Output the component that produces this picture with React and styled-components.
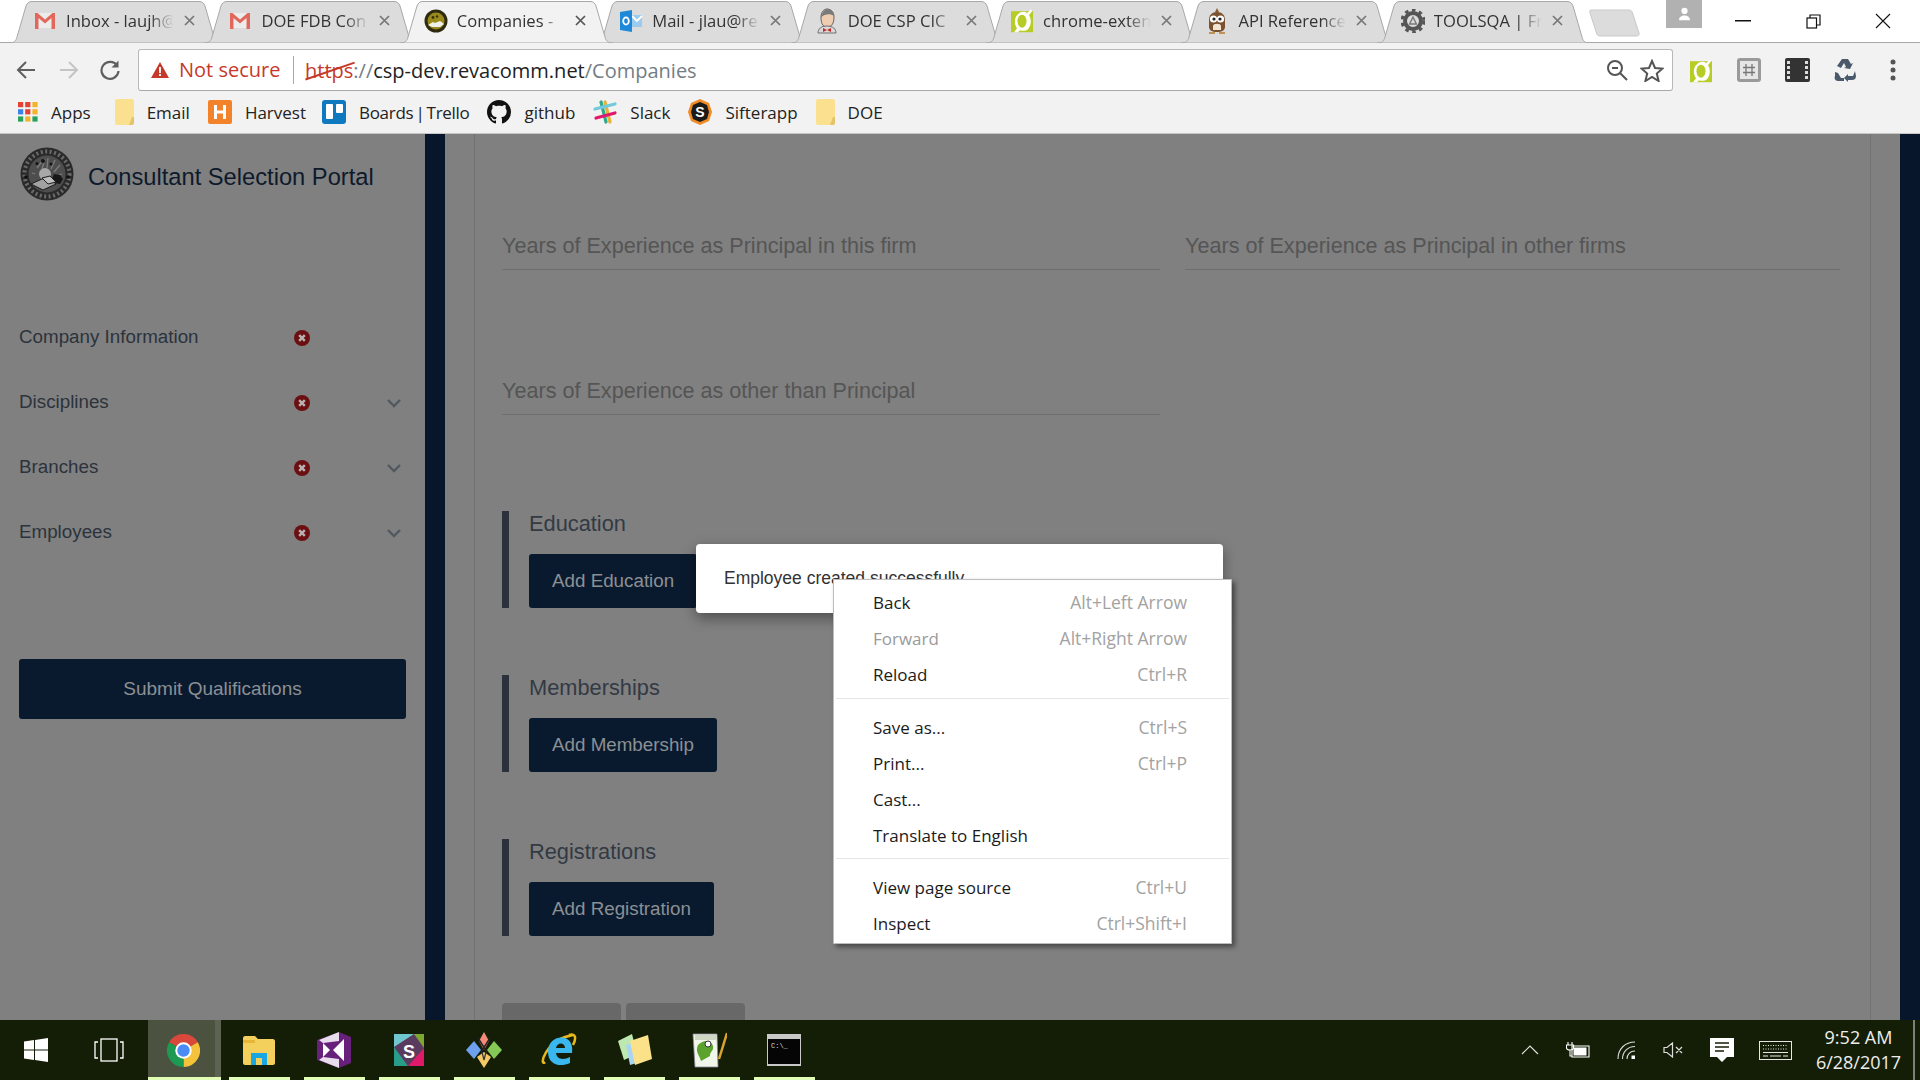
import React from 'react';
import styled, { createGlobalStyle } from 'styled-components';

const Global = createGlobalStyle`
  html, body { margin: 0; padding: 0; background: #fff; }
  * { box-sizing: border-box; }
`;
const UI = `"Open Sans", "Noto Sans", sans-serif`;
const WEB = `"Liberation Sans", Arial, sans-serif`;

const Root = styled.div`position: relative; width: 1920px; height: 1080px; overflow: hidden; display: flex; flex-direction: column; font-family: ${UI};`;

/* ---------- tab strip ---------- */
const Strip = styled.div`height: 43px; flex: none; display: flex; align-items: flex-start; padding-left: 9px; border-bottom: 1px solid #a9a9a9; background: #fff; position: relative;`;
const TabBox = styled.div`position: relative; width: 213px; height: 43px; margin-right: -17.6px; flex: none; z-index: ${p => p.$active ? 3 : 1}; display: flex; align-items: center; padding: 0 0 2px 24px;`;
const TabShape = styled.svg`position: absolute; left: 0; top: 0; width: 213px; height: 43px;`;
const Fav = styled.span`position: relative; width: 24px; height: 24px; flex: none; display: flex; align-items: center; justify-content: center;`;
const TabTitle = styled.span`position: relative; width: 110px; margin-left: 9px; font-size: 16.6px; color: #333; white-space: nowrap; overflow: hidden; -webkit-mask-image: linear-gradient(90deg, #000 76%, transparent 98%); mask-image: linear-gradient(90deg, #000 76%, transparent 98%);`;
const TabClose = styled.svg`position: relative; width: 11px; height: 11px; margin-left: 8px; flex: none;`;
const NewTab = styled.svg`width: 52px; height: 28px; margin: 9px 0 0 17px; flex: none; position: relative; z-index: 0;`;
const Profile = styled.div`width: 36px; height: 28px; margin-left: 25px; background: #b1b1b1; display: flex; align-items: center; justify-content: center; flex: none;`;
const WinControls = styled.div`display: flex; margin-left: 6px; flex: none;`;
const WinBtn = styled.div`width: 70px; height: 42px; display: flex; align-items: center; justify-content: center;`;

/* ---------- toolbar ---------- */
const Toolbar = styled.div`height: 55px; flex: none; background: #f2f2f2; display: flex; align-items: flex-start; padding-top: 6px;`;
const NavIcon = styled.div`width: ${p => p.$w}px; height: 42px; display: flex; align-items: center; justify-content: center; flex: none;`;
const NavGroup = styled.div`display: flex; padding-left: 5px; width: 138px; flex: none;`;
const Omnibox = styled.div`width: 1535px; height: 42px; flex: none; background: #fff; border: 1px solid #b8b8b8; border-bottom-color: #a8a8a8; border-radius: 3px; display: flex; align-items: center; padding-left: 12px; font-size: 20px;`;
const NotSecure = styled.span`color: #c5392b; margin-left: 10px; width: 115px; flex: none; border-right: 1px solid #aaa; line-height: 28px; height: 28px;`;
const Url = styled.span`margin-left: 11px; color: #222; white-space: nowrap;`;
const Scheme = styled.span`position: relative; color: #c5392b; &::after { content: ''; position: absolute; left: -1px; right: -3px; top: 50%; height: 2px; background: #c5392b; transform: rotate(-19deg); }`;
const Dim = styled.span`color: #737d85;`;
const OmniTools = styled.div`margin-left: auto; display: flex; align-items: center; gap: 12px; padding-right: 8px;`;
const Extensions = styled.div`display: flex; align-items: center; flex: none; padding-left: 4px;`;
const ExtCell = styled.div`width: 48px; height: 42px; display: flex; align-items: center; justify-content: center; flex: none;`;

/* ---------- bookmarks ---------- */
const Bookmarks = styled.div`height: 36px; flex: none; background: #f2f2f2; border-bottom: 1px solid #c6c6c6; display: flex; align-items: flex-start; padding-left: 18px; gap: 18px;`;
const Mark = styled.div`display: flex; align-items: center; gap: 13px; height: 28px; font-size: 17px; color: #222; margin-right: ${p => p.$extra || 0}px; word-spacing: ${p => p.$tight ? -2 : 0}px; letter-spacing: ${p => p.$tight ? -0.3 : 0}px;`;

/* ---------- dimmed page ---------- */
const Page = styled.div`flex: 1; min-height: 0; display: flex; background: #808080; font-family: ${WEB}; overflow: hidden;`;
const Sidebar = styled.aside`width: 425px; flex: none; display: flex; flex-direction: column;`;
const Brand = styled.div`display: flex; align-items: center; gap: 14px; padding: 13px 0 0 20px; height: 67px;`;
const BrandName = styled.div`font-size: 23.700px; color: #0e1a2b; margin-top: 6px; white-space: nowrap;`;
const Nav = styled.nav`margin-top: 117px; display: flex; flex-direction: column; gap: 25px; padding: 0 19px;`;
const NavRow = styled.div`height: 40px; display: grid; grid-template-columns: 275px 16px 1fr; align-items: center;`;
const NavLabel = styled.span`font-size: 18.800px; color: #2c333c; margin-top: -3px;`;
const Submit = styled.button`margin: 106px 0 0 19px; width: 387px; height: 60px; background: #0a1a2e; color: #8b9095; border: 0; border-radius: 3px; font: 19px ${WEB}; flex: none;`;
const Chevron = styled.svg`justify-self: end; width: 16px; height: 10px; margin-right: 4px;`;
const Stripe = styled.div`width: ${p => p.$w}px; flex: none; background: #07162a;`;
const Content = styled.main`flex: 1; min-width: 0; padding: 0 30px 0 29px; display: flex;`;
const Panel = styled.div`flex: 1; border-left: 1px solid #717171; border-right: 1px solid #717171; padding: 86px 30px 0 27px; display: flex; flex-direction: column;`;
const FieldGrid = styled.div`display: grid; grid-template-columns: 658px 655px; column-gap: 25px; row-gap: 95px; margin-bottom: 96px;`;
const Field = styled.div`height: 50px; border-bottom: 1px solid #6e6e6e; font-size: 21.600px; color: #555; line-height: 52px; white-space: nowrap;`;
const Section = styled.section`height: 97px; border-left: 7px solid #2b323c; padding-left: 20px; margin-bottom: 67px; flex: none;`;
const SectionTitle = styled.h3`margin: 0; height: 43px; font-size: 21.800px; font-weight: 400; color: #333a44; line-height: 26px;`;
const AddButton = styled.button`height: 54px; padding: 0 23px; background: #0a1a2e; color: #8b9095; border: 0; border-radius: 3px; font: 18.800px ${WEB}; display: block;`;
const BottomRow = styled.div`display: flex; gap: 5px;`;
const GhostButton = styled.div`width: 119px; height: 40px; background: #686868; border-radius: 4px 4px 0 0;`;

/* ---------- taskbar ---------- */
const Taskbar = styled.div`height: 60px; flex: none; background: #141e06; display: flex; align-items: stretch; color: #fff;`;
const TaskCell = styled.div`position: relative; width: ${p => p.$w}px; flex: none; display: flex; align-items: center; justify-content: center; background: ${p => p.$active ? 'linear-gradient(90deg, transparent 2px, #4b5340 2px, #4b5340 69px, #5c6352 69px)' : 'transparent'};`;
const RunLine = styled.span`position: absolute; bottom: 0; left: ${p => p.$l}px; right: ${p => p.$r}px; height: 3px; background: #e2fdb6;`;
const Tray = styled.div`margin-left: auto; display: flex; align-items: stretch; padding-right: 5px;`;
const Clock = styled.div`width: 110px; display: flex; flex-direction: column; align-items: center; justify-content: center; font-size: 18px; line-height: 25px; color: #eee; white-space: nowrap; margin-top: -1px; padding-left: 1px;`;
const ShowDesktop = styled.div`width: 2px; background: #7c7f78;`;

/* ---------- floating ---------- */
const Toast = styled.div`position: absolute; left: 696px; top: 544px; width: 527px; height: 69px; background: #fff; border-radius: 4px; box-shadow: 0 5px 14px rgba(0,0,0,.4); font: 17.500px ${WEB}; color: #333; padding: 24px 28px; z-index: 5;`;
const Menu = styled.div`position: absolute; left: 833px; top: 579px; width: 399px; height: 365px; background: #fff; border: 1px solid #bdbdbd; box-shadow: 3px 3px 5px rgba(0,0,0,.45); padding: 4px 0 0; z-index: 6; font-size: 17px;`;
const MenuRow = styled.div`height: 36px; display: flex; align-items: center; justify-content: space-between; padding: 0 44px 0 39px; color: ${p => p.$off ? '#9a9a9a' : '#1b1b1b'};`;
const Shortcut = styled.span`color: #a2a2a2; font-size: 17.500px;`;
const MenuSep = styled.div`height: 1px; background: #e6e6e6; margin: ${p => p.$top}px 2px 10px;`;

/* ---------- drawings ---------- */
const Gmail = () => <svg width="22" height="17" viewBox="0 0 22 17"><rect x="1" y="1" width="20" height="15" fill="#ececec"/><path d="M1 1h2.500L11 7.500 18.500 1H21v16h-3.500V6L11 11.500 4.500 6v11H1z" fill="#e2685c"/></svg>;
const SealFav = () => <svg width="24" height="24" viewBox="0 0 24 24"><circle cx="12" cy="12" r="11.500" fill="#2e2a10"/><circle cx="12" cy="12" r="8.500" fill="#9a8a1c"/><circle cx="9" cy="8.500" r="1.400" fill="#3b3508"/><circle cx="13" cy="7.500" r="1.200" fill="#3b3508"/><path d="M4 16l5-3 2 1 5-2 4 3-4 3H8z" fill="#f0f0ea"/></svg>;
const Outlook = () => <svg width="24" height="24" viewBox="0 0 24 24"><path d="M12 6h11v12H12z" fill="#9ccbf0"/><path d="M13 7l5 5 5-5" fill="none" stroke="#fff" strokeWidth="1.800"/><path d="M1 3l12-2v22L1 21z" fill="#1e88d9"/><ellipse cx="7" cy="12" rx="2.800" ry="3.600" fill="none" stroke="#fff" strokeWidth="1.800"/></svg>;
const Jenkins = () => <svg width="24" height="26" viewBox="0 0 24 26"><path d="M6 9c0-5 3-8 6-8s7 2 7 8-2 10-7 10-6-5-6-10z" fill="#eecdb0" stroke="#555" strokeWidth=".9"/><path d="M6 9c1-5 4-8 7-8s5 2 6 7c-4-3-9-2-13 1z" fill="#7a7a7a"/><path d="M3 25c0-4 3-7 9-7s9 3 9 7z" fill="#d9d9d9" stroke="#555" strokeWidth=".8"/><path d="M8 20l4 2 4-2v4l-4-2-4 2z" fill="#c42a2a"/></svg>;
const ExtFav = ({ s = 24 }) => <svg width={s} height={s * 1.1} viewBox="0 0 24 26"><path d="M1 4h22v21H1z" fill="#b8cc26"/><path d="M4 25l3-4c-3-4-3-11 1-14 3-3 7-3 9-1l4-4 1 2-3 4c3 4 2 11-1 14-2 2-6 2-8 1l-2 2z" fill="#fff"/><ellipse cx="12" cy="14" rx="4.500" ry="6.500" fill="#b8cc26"/></svg>;
const Owl = () => <svg width="22" height="26" viewBox="0 0 22 26"><path d="M11 0l2 4-2 1-2-1z" fill="#8a5b34"/><path d="M3 12c0-5 3-8 8-8s8 3 8 8v7c0 3-3 5-8 5s-8-2-8-5z" fill="#7a5230"/><path d="M7 18c0-3 8-3 8 0v4H7z" fill="#f2e6d2"/><circle cx="7.500" cy="11" r="3.600" fill="#fff"/><circle cx="14.500" cy="11" r="3.600" fill="#fff"/><circle cx="8" cy="11" r="1.600" fill="#222"/><circle cx="14" cy="11" r="1.600" fill="#222"/><path d="M3 25h6M13 25h6" stroke="#b6782e" strokeWidth="1.600"/></svg>;
const Gear = () => <svg width="24" height="24" viewBox="0 0 24 24"><circle cx="12" cy="12" r="8" fill="none" stroke="#555" strokeWidth="4"/><circle cx="12" cy="12" r="11" fill="none" stroke="#555" strokeWidth="3" strokeDasharray="3.600 3.600"/><path d="M12 8l3.400 7H8.600z" fill="none" stroke="#777" strokeWidth="1.400"/></svg>;
const CloseX = ({ c }) => <TabClose viewBox="0 0 11 11"><path d="M1 1l9 9M10 1l-9 9" stroke={c} strokeWidth="1.700"/></TabClose>;

const tabs = [
  { t: 'Inbox - laujh@', i: <Gmail /> },
  { t: 'DOE FDB Con', i: <Gmail /> },
  { t: 'Companies -', i: <SealFav />, a: true },
  { t: 'Mail - jlau@re', i: <Outlook /> },
  { t: 'DOE CSP CIC', i: <Jenkins /> },
  { t: 'chrome-exten', i: <ExtFav /> },
  { t: 'API Reference', i: <Owl /> },
  { t: 'TOOLSQA | Fr', i: <Gear /> },
];

const Tab = ({ t, i, a }) => (
  <TabBox $active={a}>
    <TabShape viewBox="0 0 213 43">
      <path d="M0.5 43C5 43 7 41 8 37L17 6C18 3 20 1.500 23 1.500H190C193 1.500 195 3 196 6L205 37C206 41 208 43 212.500 43Z" fill={a ? '#f2f2f2' : '#dcdcdc'} stroke="#a8a8a8" strokeWidth="1" />
    </TabShape>
    <Fav>{i}</Fav>
    <TabTitle>{t}</TabTitle>
    <CloseX c={a ? '#555' : '#777'} />
  </TabBox>
);

const Folder = () => <svg width="19" height="26" viewBox="0 0 19 26"><path d="M0 2c0-1 1-2 2-2h15c1 0 2 1 2 2v22c0 1-1 2-2 2H2c-1 0-2-1-2-2z" fill="#fbe08f"/><path d="M17 18h2v6c0 1-1 2-2 2h-3z" fill="#e5c36a"/></svg>;
const Apps = () => <svg width="20" height="20" viewBox="0 0 20 20">{[['#e34133', '#e34133', '#f3b32a'], ['#3f7fe8', '#e34133', '#f3b32a'], ['#2aa15a', '#f3b32a', '#2aa15a']].map((r, y) => r.map((c, x) => <rect key={`${x}${y}`} x={x * 7.200} y={y * 7.200} width="5.200" height="5.200" fill={c} />))}</svg>;
const Harvest = () => <svg width="24" height="24" viewBox="0 0 24 24"><rect width="24" height="24" rx="2" fill="#f2832b"/><path d="M7.500 5v14M16.500 5v14M7.500 12h9" stroke="#fff" strokeWidth="3"/></svg>;
const Trello = () => <svg width="24" height="24" viewBox="0 0 24 24"><rect width="24" height="24" rx="3" fill="#0f79bf"/><rect x="4" y="4" width="7" height="15" rx="1" fill="#fff"/><rect x="14" y="4" width="7" height="9" rx="1" fill="#fff"/></svg>;
const Github = () => <svg width="24" height="24" viewBox="0 0 16 16"><path fill="#111" d="M8 0C3.580 0 0 3.580 0 8c0 3.540 2.290 6.530 5.470 7.590.4.070.55-.17.55-.38 0-.19-.01-.82-.01-1.490-2.010.37-2.530-.49-2.690-.94-.09-.23-.48-.94-.82-1.130-.28-.15-.68-.52-.01-.53.63-.01 1.080.58 1.230.82.72 1.210 1.870.87 2.330.66.07-.52.28-.87.51-1.070-1.780-.2-3.640-.89-3.640-3.950 0-.87.31-1.590.82-2.150-.08-.2-.36-1.020.08-2.120 0 0 .67-.21 2.200.82.640-.18 1.320-.27 2-.27s1.360.09 2 .27c1.530-1.040 2.200-.82 2.200-.82.44 1.100.16 1.920.08 2.120.51.56.82 1.270.82 2.150 0 3.070-1.870 3.750-3.650 3.950.29.25.54.73.54 1.480 0 1.070-.01 1.930-.01 2.200 0 .21.15.46.55.38A8.013 8.013 0 0016 8c0-4.420-3.580-8-8-8z"/></svg>;
const Slack = () => <svg width="24" height="24" viewBox="0 0 24 24" strokeWidth="3.200" strokeLinecap="round"><path d="M8 2l5 20" stroke="#2fa98c"/><path d="M15 2l5 20" stroke="#e8b23a" transform="translate(-3 0)"/><path d="M2 9l20-5" stroke="#70cadb"/><path d="M3 18l19-5" stroke="#df1a6a"/></svg>;
const Sifter = () => <svg width="24" height="26" viewBox="0 0 24 26"><path d="M12 0l9 4 3 9-3 9-9 4-9-4-3-9 3-9z" fill="#f08a24"/><path d="M12 3l7 3 2 7-2 7-7 3-7-3-2-7 2-7z" fill="#1a1a1a"/><text x="12" y="18" textAnchor="middle" fontFamily="Liberation Sans" fontWeight="700" fontSize="14" fill="#fff">S</text></svg>;

const Seal = () => (
  <svg width="54" height="54" viewBox="0 0 54 54">
    <circle cx="27" cy="27" r="26.500" fill="#2a2a2a" />
    <circle cx="27" cy="27" r="22.500" fill="none" stroke="#6a6a6a" strokeWidth="4" strokeDasharray="2 2.500" />
    <circle cx="27" cy="27" r="18.500" fill="#4e4e4e" />
    <path d="M17 21l6-8M22 22l3-10M27 21l1-10M31 22l4-9M34 25l6-7M15 27l-3-1M39 28l3-1" stroke="#7c7c7c" strokeWidth="1.300" />
    <circle cx="25" cy="27" r="6" fill="#a8a8a8" />
    <circle cx="17" cy="16.500" r="1.500" fill="#141414" /><circle cx="23" cy="14" r="2" fill="#141414" /><circle cx="31" cy="17" r="1.500" fill="#141414" />
    <path d="M34 27l6 1 3 4-3 5-6-1-2-4z" fill="#171717" />
    <path d="M11 37l11-5 6-1 8 6-13 6z" fill="#a2a2a2" stroke="#1c1c1c" strokeWidth="1" />
    <path d="M22 31l8-2 6 6-8 2z" fill="#bdbdbd" stroke="#1c1c1c" strokeWidth="1" />
    <circle cx="6" cy="30" r="1.800" fill="#111" /><circle cx="48" cy="30" r="1.800" fill="#111" />
  </svg>
);
const ErrorDot = () => <svg width="16" height="16" viewBox="0 0 16 16"><circle cx="8" cy="8" r="8" fill="#6c0f13"/><path d="M5.200 5.200l5.600 5.600M10.800 5.200l-5.600 5.600" stroke="#b9b2b2" strokeWidth="2.400"/></svg>;
const Down = () => <Chevron viewBox="0 0 16 10"><path d="M2 2l6 6 6-6" fill="none" stroke="#51585f" strokeWidth="2.400"/></Chevron>;

const ChromeLogo = () => <svg width="33" height="33" viewBox="0 0 32 32"><path d="M16 16L2.140 8A16 16 0 0 1 29.860 8Z" fill="#d9483b"/><path d="M16 16L29.860 8A16 16 0 0 1 16 32Z" fill="#f5c33b"/><path d="M16 16L16 32A16 16 0 0 1 2.140 8Z" fill="#1c9a52"/><circle cx="16" cy="16" r="8" fill="#fff"/><circle cx="16" cy="16" r="6" fill="#4b8bf5"/></svg>;
const WinLogo = () => <svg width="24" height="24" viewBox="0 0 24 24" fill="#fff"><path d="M0 3.500l10-1.400v9.400H0zM11 2l13-2v11.500H11zM0 12.500h10v9.400L0 20.500zM11 12.500h13V24l-13-2z"/></svg>;
const TaskView = () => <svg width="30" height="24" viewBox="0 0 30 24" fill="none" stroke="#fff" strokeWidth="1.300"><rect x="7" y="1" width="16" height="22"/><path d="M4 4H1v16h3M26 4h3v16h-3"/></svg>;
const Explorer = () => <svg width="32" height="30" viewBox="0 0 32 30"><path d="M0 3c0-1 1-2 2-2h10l3 3h15c1 0 2 1 2 2v22c0 1-1 2-2 2H2c-1 0-2-1-2-2z" fill="#f3cf5b"/><path d="M0 5h12v3H0z" fill="#e6b53a"/><path d="M8 30V18h16v12h-5v-7h-6v7z" fill="#1aa5e3"/></svg>;
const VS = () => <svg width="34" height="36" viewBox="0 0 34 36"><path d="M0 8l22-8 12 5v26l-12 5L0 28z" fill="#68217a"/><path d="M6 11l7 7-7 7zM27 7v22l-11-11z" fill="#fff" /><path d="M22 0v9l-16 2-4-3zM22 36v-9L6 25l-4 3z" fill="#fff" opacity=".85"/></svg>;
const SlackApp = () => <svg width="32" height="34" viewBox="0 0 32 34"><path d="M1 1h30v32H1z" fill="#5a3a5e"/><path d="M1 1h20L1 14z" fill="#6fc6cf"/><path d="M21 1h10v14z" fill="#7ca832"/><path d="M31 15v18H15z" fill="#df1a6a"/><path d="M1 14v19h14z" fill="#2a9d8a"/><text x="16" y="25" textAnchor="middle" fontFamily="Liberation Sans" fontWeight="700" fontSize="18" fill="#fff">S</text></svg>;
const GitKraken = () => <svg width="36" height="36" viewBox="0 0 36 36"><path d="M18 0l5 9-5 9-5-9z" fill="#f58a7c"/><path d="M0 18l8-9 7 9-7 9z" fill="#6da0ef"/><path d="M36 18l-8-9-7 9 7 9z" fill="#86c957"/><path d="M18 36l-7-11 7-5 7 5z" fill="#f4ca66"/><path d="M16 20l2 8 2-8" stroke="#333" strokeWidth="1.200" fill="none"/><path d="M12 6l9 14M24 6l-9 14" stroke="#222" strokeWidth="1.400"/></svg>;
const IE = () => <svg width="36" height="36" viewBox="0 0 36 36"><path d="M4 30C-2 36 3 8 32 3" fill="none" stroke="#e6b81d" strokeWidth="2.500"/><path d="M28 3c6-2 8 2 4 10" fill="none" stroke="#e6b81d" strokeWidth="2.500"/><path d="M31 21H15c1 7 8 7 14 4v6c-11 5-22 1-22-11C7 8 17 4 24 6c6 2 8 8 7 15zM15 16h9c0-6-8-6-9 0z" fill="#39b7ee"/></svg>;
const Sticky = () => <svg width="36" height="34" viewBox="0 0 36 34"><path d="M2 8l14-7 5 20-13 6z" fill="#bde8b0"/><path d="M10 12l14-4 4 20-14 4z" fill="#a9d5f2"/><path d="M14 8l18-6 4 24-17 6z" fill="#fbe28a"/></svg>;
const Notepad = () => <svg width="36" height="38" viewBox="0 0 36 38"><path d="M2 3h24l1 33H4z" fill="#f1f6ea" stroke="#889" strokeWidth=".8"/><path d="M4 4h21v5H4z" fill="#cfd6c2"/><path d="M7 14c6-6 13-5 15 1 1 5-3 5-3 10l-9 5c-2-7-6-9-3-16z" fill="#5ba32c"/><circle cx="17" cy="13" r="3" fill="#fff" stroke="#333"/><path d="M28 28L36 2" stroke="#d8a530" strokeWidth="2.500"/></svg>;
const Cmd = () => <svg width="34" height="32" viewBox="0 0 34 32"><rect width="34" height="32" fill="#c8c8c8"/><rect x="1" y="5" width="32" height="25" fill="#050505"/><text x="4" y="14" fontFamily="Liberation Mono" fontSize="7" fill="#ddd">C:\_</text></svg>;

const Battery = () => <svg width="24" height="16" viewBox="0 0 24 16" fill="none" stroke="#fff" strokeWidth="1.100"><path d="M2 0v3M6 0v3M0.500 3h7v2.500C7.500 7.500 6 8 4 8s-3.500-.5-3.500-2.500zM4 8v6h2"/><path d="M6 4h17v11H6z"/><rect x="7.500" y="5.500" width="13" height="8" fill="#fff" stroke="none"/></svg>;
const Wifi = () => <svg width="20" height="18" viewBox="0 0 20 18" fill="none" stroke="#ddd" strokeWidth="1.100"><path d="M1 18C1 8 8 1 18 1"/><path d="M5.500 18c0-7 5-12.500 12.500-12.500"/><path d="M10 18c0-4.500 3-8 8-8"/><rect x="14.500" y="14.500" width="3.500" height="3.500" fill="#fff" stroke="none"/></svg>;
const Mute = () => <svg width="22" height="16" viewBox="0 0 22 16" fill="none" stroke="#ddd" strokeWidth="1.200"><path d="M1 5.500h3L9.500 1v14L4 10.500H1zM13 5l6 6M19 5l-6 6"/></svg>;
const Notice = () => <svg width="24" height="24" viewBox="0 0 24 24"><path d="M0 0h24v19h-7l-5 5-5-5H0z" fill="#fff"/><path d="M5 5h14M5 9h14M5 13h9" stroke="#141e06" strokeWidth="1.300"/></svg>;
const Keyboard = () => <svg width="33" height="19" viewBox="0 0 33 19" fill="none" stroke="#e6e6e6" strokeWidth="1"><rect x=".5" y=".5" width="32" height="18" /><path d="M4 4.500h25M4 8h25" strokeDasharray="1 1.500"/><path d="M4 11.500h25M4 15h5M11 15h11M24 15h5" /></svg>;

const sections = [
  ['Education', 'Add Education'],
  ['Memberships', 'Add Membership'],
  ['Registrations', 'Add Registration'],
];
const navItems = [['Company Information', false], ['Disciplines', true], ['Branches', true], ['Employees', true]];
const marks = [
  ['Apps', <Apps key="a" />, 6], ['Email', <Folder key="f" />, 0], ['Harvest', <Harvest key="h" />, -2], ['Boards | Trello', <Trello key="t" />, 0, true],
  ['github', <Github key="g" />], ['Slack', <Slack key="s" />], ['Sifterapp', <Sifter key="si" />], ['DOE', <Folder key="d" />],
];
const menuGroups = [
  [['Back', 'Alt+Left Arrow'], ['Forward', 'Alt+Right Arrow', true], ['Reload', 'Ctrl+R']],
  [['Save as...', 'Ctrl+S'], ['Print...', 'Ctrl+P'], ['Cast...', ''], ['Translate to English', '']],
  [['View page source', 'Ctrl+U'], ['Inspect', 'Ctrl+Shift+I']],
];
const apps = [<Explorer key="1" />, <VS key="2" />, <SlackApp key="3" />, <GitKraken key="4" />, <IE key="5" />, <Sticky key="6" />, <Notepad key="7" />, <Cmd key="8" />];
const tray = [[48, <svg key="c" width="18" height="10" viewBox="0 0 18 10" fill="none" stroke="#ddd" strokeWidth="1.200"><path d="M1 9l8-8 8 8" /></svg>], [48, <Battery key="b" />], [49, <Wifi key="w" />], [46, <Mute key="m" />], [50, <Notice key="n" />], [56, <Keyboard key="k" />]];

export default function App() {
  return (
    <Root>
      <Global />
      <Strip>
        {tabs.map(t => <Tab key={t.t} {...t} />)}
        <NewTab viewBox="0 0 52 28"><path d="M2 1h38c2 0 3 1 3.500 3L50 24c.5 2-.5 3-2.500 3H11c-2 0-3-1-3.500-3L1 4C.5 2 .5 1 2 1z" fill="#dcdcdc" stroke="#c9c9c9"/></NewTab>
        <Profile><svg width="13" height="14" viewBox="0 0 16 18" fill="#fff"><circle cx="8" cy="5" r="4"/><path d="M1 17c0-4 3-6 7-6s7 2 7 6z"/></svg></Profile>
        <WinControls>
          <WinBtn><svg width="16" height="2"><rect width="16" height="1.500" fill="#111"/></svg></WinBtn>
          <WinBtn><svg width="15" height="15" viewBox="0 0 15 15" fill="none" stroke="#111" strokeWidth="1.200"><rect x="1" y="4" width="9.500" height="10" fill="#fff"/><path d="M4 4V1h10v10h-3.500"/></svg></WinBtn>
          <WinBtn><svg width="16" height="16" viewBox="0 0 16 16"><path d="M1 1l14 14M15 1L1 15" stroke="#111" strokeWidth="1.100"/></svg></WinBtn>
        </WinControls>
      </Strip>

      <Toolbar>
        <NavGroup>
          <NavIcon $w={42}><svg width="20" height="20" viewBox="0 0 20 20" fill="none" stroke="#5f5f5f" strokeWidth="2"><path d="M19 10H2M10 2l-8 8 8 8"/></svg></NavIcon>
          <NavIcon $w={43}><svg width="20" height="20" viewBox="0 0 20 20" fill="none" stroke="#c4c4c4" strokeWidth="2"><path d="M1 10h17M10 2l8 8-8 8"/></svg></NavIcon>
          <NavIcon $w={40}><svg width="22" height="22" viewBox="0 0 22 22" fill="none" stroke="#5f5f5f" strokeWidth="2.200"><path d="M18 6.500A8.500 8.500 0 1 0 19.500 12"/><path d="M19.500 1.500v7h-7z" fill="#5f5f5f" stroke="none"/></svg></NavIcon>
        </NavGroup>
        <Omnibox>
          <svg width="18" height="16" viewBox="0 0 18 16"><path d="M9 0l9 16H0z" fill="#c5392b"/><path d="M9 5v6M9 12v2" stroke="#fff" strokeWidth="1.800"/></svg>
          <NotSecure>Not secure</NotSecure>
          <Url><Scheme>https</Scheme><Dim>://</Dim>csp-dev.revacomm.net<Dim>/Companies</Dim></Url>
          <OmniTools>
            <svg width="22" height="22" viewBox="0 0 22 22" fill="none" stroke="#555" strokeWidth="2"><circle cx="9" cy="9" r="7"/><path d="M14 14l7 7M6 9h6"/></svg>
            <svg width="24" height="23" viewBox="0 0 24 23" fill="none" stroke="#555" strokeWidth="2"><path d="M12 2l3 7 7.500.6-5.700 5 1.800 7.400-6.600-4-6.600 4 1.800-7.400-5.700-5L9 9z"/></svg>
          </OmniTools>
        </Omnibox>
        <Extensions>
          <ExtCell><ExtFav /></ExtCell>
          <ExtCell><svg width="24" height="24" viewBox="0 0 24 24"><rect width="24" height="24" rx="3" fill="#9a9a9a"/><rect x="3" y="3" width="18" height="18" fill="#e6e6e6"/><path d="M9 6v12M15 6v12M6 9.500h12M6 14.500h12" stroke="#777" strokeWidth="1.300"/></svg></ExtCell>
          <ExtCell><svg width="25" height="24" viewBox="0 0 25 24"><rect width="25" height="24" rx="2" fill="#333"/><path d="M2 3h3v3H2zM2 8h3v3H2zM2 13h3v3H2zM2 18h3v3H2zM20 3h3v3h-3zM20 8h3v3h-3zM20 13h3v3h-3zM20 18h3v3h-3z" fill="#ddd"/></svg></ExtCell>
          <ExtCell><svg width="24" height="24" viewBox="0 0 24 24" fill="#4a5a6a"><path d="M9 1h6l3 5 2-1-3 6-6-1 2-1-2-4-3 5-4-2zM2 14l3 1 3 5h3v3H5c-3 0-4-3-3-5zM22 13l1 5c0 3-2 4-4 4h-4v2l-4-4 4-4v2h5z"/></svg></ExtCell>
          <ExtCell><svg width="6" height="24" viewBox="0 0 6 24" fill="#555"><circle cx="3" cy="4" r="2.500"/><circle cx="3" cy="12" r="2.500"/><circle cx="3" cy="20" r="2.500"/></svg></ExtCell>
        </Extensions>
      </Toolbar>

      <Bookmarks>
        {marks.map(([label, icon, extra, tight], i) => <Mark key={i} $extra={extra} $tight={tight}>{icon}<span>{label}</span></Mark>)}
      </Bookmarks>

      <Page>
        <Sidebar>
          <Brand><Seal /><BrandName>Consultant Selection Portal</BrandName></Brand>
          <Nav>
            {navItems.map(([label, more]) => (
              <NavRow key={label}><NavLabel>{label}</NavLabel><ErrorDot />{more && <Down />}</NavRow>
            ))}
          </Nav>
          <Submit>Submit Qualifications</Submit>
        </Sidebar>
        <Stripe $w={20} />
        <Content>
          <Panel>
            <FieldGrid>
              <Field>Years of Experience as Principal in this firm</Field>
              <Field>Years of Experience as Principal in other firms</Field>
              <Field>Years of Experience as other than Principal</Field>
            </FieldGrid>
            {sections.map(([title, action]) => (
              <Section key={title}>
                <SectionTitle>{title}</SectionTitle>
                <AddButton>{action}</AddButton>
              </Section>
            ))}
            <BottomRow><GhostButton /><GhostButton /></BottomRow>
          </Panel>
        </Content>
        <Stripe $w={20} />
      </Page>

      <Taskbar>
        <TaskCell $w={72}><WinLogo /></TaskCell>
        <TaskCell $w={74}><TaskView /></TaskCell>
        <TaskCell $w={75} $active><ChromeLogo /><RunLine $l={2} $r={0} /></TaskCell>
        {apps.map((a, i) => <TaskCell key={i} $w={75}>{a}<RunLine $l={8} $r={6} /></TaskCell>)}
        <Tray>
          {tray.map(([w, icon], i) => <TaskCell key={i} $w={w}>{icon}</TaskCell>)}
          <Clock><span>9:52 AM</span><span>6/28/2017</span></Clock>
          <ShowDesktop />
        </Tray>
      </Taskbar>

      <Toast>Employee created successfully.</Toast>
      <Menu>
        {menuGroups.map((g, i) => (
          <React.Fragment key={i}>
            {i > 0 && <MenuSep $top={i === 1 ? 6 : 5} />}
            {g.map(([l, s, off]) => <MenuRow key={l} $off={off}><span>{l}</span><Shortcut>{s}</Shortcut></MenuRow>)}
          </React.Fragment>
        ))}
      </Menu>
    </Root>
  );
}
